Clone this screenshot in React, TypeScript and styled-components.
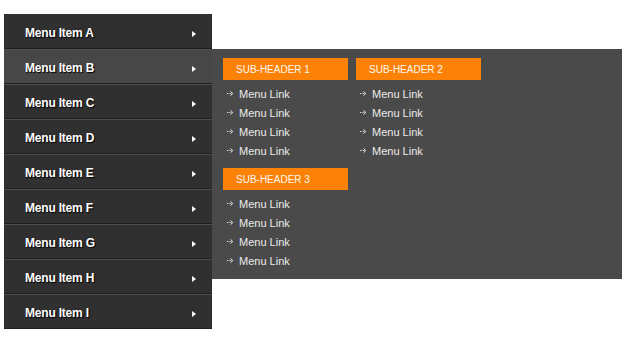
import React from "react";
import styled, { createGlobalStyle } from "styled-components";

const Global = createGlobalStyle`
  html, body { margin: 0; padding: 0; background: #ffffff; }
  body { font-family: "Liberation Sans", Arial, sans-serif; }
`;

const Page = styled.div`
  padding: 14px 0 0 4px;
  width: 638px;
  height: 340px;
  box-sizing: border-box;
`;

const Menu = styled.ul`
  list-style: none;
  margin: 0;
  padding: 0;
  width: 208px;
  display: flex;
  flex-direction: column;
`;

const Item = styled.li<{ $active?: boolean; $first?: boolean }>`
  position: relative;
  height: 35px;
  box-sizing: border-box;
  display: flex;
  align-items: center;
  justify-content: space-between;
  padding: 2px 16px 0 21px;
  background: ${(p) => (p.$active ? "#474747" : "#303030")};
  border-top: 1px solid ${(p) => (p.$first ? "#303030" : "#4e4e4e")};
  border-bottom: 1px solid #1f1f1f;
  color: #ffffff;
  font-weight: bold;
  font-size: 12px;
  letter-spacing: -0.2px;
  text-shadow: 1px 1px 1px #000;
`;

const Caret = styled.span`
  width: 0;
  height: 0;
  margin-top: 2px;
  border-top: 3px solid transparent;
  border-bottom: 3px solid transparent;
  border-left: 4px solid #ffffff;
`;

const Flyout = styled.div`
  position: absolute;
  left: 100%;
  top: -1px;
  width: 410px;
  height: 230px;
  box-sizing: border-box;
  background: #4a4a4a;
  padding: 9px 0 0 11px;
  display: grid;
  grid-template-columns: 125px 125px;
  column-gap: 8px;
  row-gap: 9px;
  align-content: start;
  text-shadow: none;
  letter-spacing: 0;
  font-weight: normal;
  z-index: 2;
`;

const Group = styled.div`
  display: flex;
  flex-direction: column;
`;

const SubHeader = styled.div`
  height: 22px;
  overflow: hidden;
  background: #fb8207;
  color: #fff8ee;
  font-size: 10px;
  line-height: 24px;
  padding-left: 13px;
  text-transform: uppercase;
`;

const Links = styled.ul`
  list-style: none;
  margin: 0;
  padding: 3px 0 0 0;
`;

const LinkRow = styled.li`
  height: 19px;
  box-sizing: border-box;
  display: flex;
  align-items: center;
  gap: 5px;
  padding: 2px 0 0 4px;
  color: #ececec;
  font-size: 11px;
`;

const Arrow = () => (
  <svg width="7" height="5" viewBox="0 0 7 5" style={{ display: "block" }}>
    <path d="M0 2.5H5" stroke="#d8d8d8" strokeWidth="1" strokeDasharray="1 0.6" />
    <path d="M3.5 0.5L5.8 2.5L3.5 4.5" stroke="#e8e8e8" strokeWidth="1" fill="none" />
  </svg>
);

const groups = ["Sub-Header 1", "Sub-Header 2", "Sub-Header 3"];
const items = ["A", "B", "C", "D", "E", "F", "G", "H", "I"];

export default function App() {
  return (
    <Page>
      <Global />
      <Menu>
        {items.map((l, i) => (
          <Item key={l} $active={l === "B"} $first={i === 0}>
            <span>Menu Item {l}</span>
            <Caret />
            {l === "B" && (
              <Flyout>
                {groups.map((g) => (
                  <Group key={g}>
                    <SubHeader>{g}</SubHeader>
                    <Links>
                      {[0, 1, 2, 3].map((k) => (
                        <LinkRow key={k}>
                          <Arrow />
                          Menu Link
                        </LinkRow>
                      ))}
                    </Links>
                  </Group>
                ))}
              </Flyout>
            )}
          </Item>
        ))}
      </Menu>
    </Page>
  );
}
